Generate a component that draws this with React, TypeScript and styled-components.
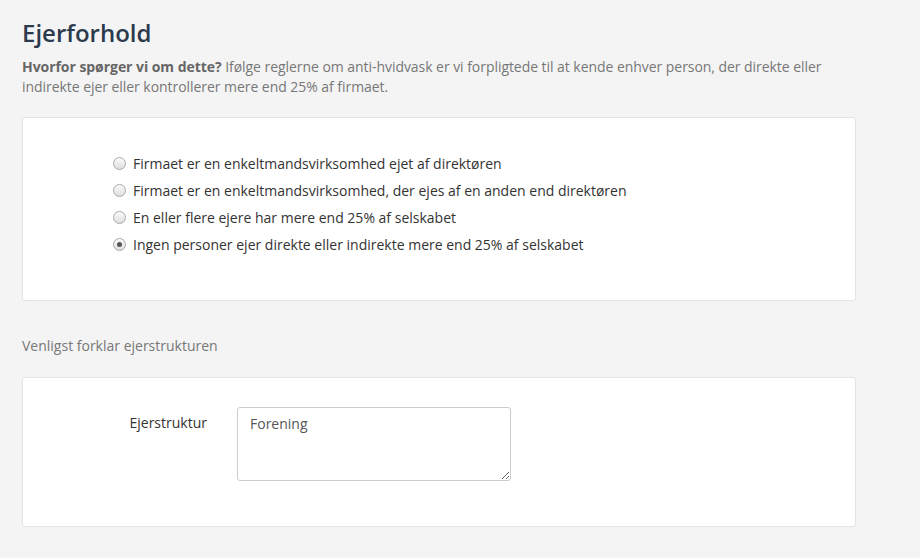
import React from 'react';
import styled, { createGlobalStyle } from 'styled-components';

const GlobalStyle = createGlobalStyle`
	html, body {
		margin: 0;
		padding: 0;
		background: #f4f4f4;
		font-family: 'Open Sans', 'Liberation Sans', sans-serif;
	}
`;

const Page = styled.main`
	width: 834px;
	padding: 17px 0 30px 22px;
`;

const Title = styled.h1`
	margin: 0;
	font-size: 24px;
	line-height: 32px;
	font-weight: 600;
	color: #2c3a4d;
`;

const Intro = styled.p`
	margin: 8px 0 20px;
	font-size: 14px;
	line-height: 20px;
	letter-spacing: -0.05px;
	color: #777;

	strong {
		color: #666;
		font-weight: 700;
	}
`;

const Card = styled.section<{ $pad: string }>`
	background: #fff;
	border: 1px solid #e3e3e3;
	border-radius: 3px;
	padding: ${(p) => p.$pad};
`;

const RadioList = styled.div`
	display: flex;
	flex-direction: column;
`;

const RadioRow = styled.label`
	display: flex;
	align-items: center;
	gap: 7px;
	height: 27px;
	font-size: 14px;
	color: #333;
`;

const Radio = styled.span<{ $checked?: boolean }>`
	position: relative;
	width: 11px;
	height: 11px;
	border-radius: 50%;
	border: 1px solid #a9a9a9;
	background: linear-gradient(#fbfbfb, #dedede);
	flex: none;

	&::after {
		content: '';
		display: ${(p) => (p.$checked ? 'block' : 'none')};
		position: absolute;
		left: 3px;
		top: 3px;
		width: 5px;
		height: 5px;
		border-radius: 50%;
		background: #555;
	}
`;

const SectionLabel = styled.div`
	margin: 35px 0 21px;
	font-size: 14px;
	line-height: 20px;
	color: #777;
`;

const FieldRow = styled.div`
	display: grid;
	grid-template-columns: 184px 274px;
	column-gap: 30px;
	align-items: start;
`;

const FieldLabel = styled.label`
	text-align: right;
	font-size: 14px;
	line-height: 20px;
	padding-top: 6px;
	color: #333;
`;

const TextArea = styled.textarea`
	box-sizing: border-box;
	width: 274px;
	height: 74px;
	padding: 6px 12px;
	border: 1px solid #ccc;
	border-radius: 3px;
	font-family: 'Open Sans', 'Liberation Sans', sans-serif;
	font-size: 14px;
	line-height: 20px;
	color: #555;
	background: #fff;
	outline: none;
`;

const options = [
	'Firmaet er en enkeltmandsvirksomhed ejet af direktøren',
	'Firmaet er en enkeltmandsvirksomhed, der ejes af en anden end direktøren',
	'En eller flere ejere har mere end 25% af selskabet',
	'Ingen personer ejer direkte eller indirekte mere end 25% af selskabet',
];

const App: React.FC = () => {
	return (
		<>
			<GlobalStyle />
			<Page>
				<Title>Ejerforhold</Title>
				<Intro>
					<strong>Hvorfor spørger vi om dette?</strong> Ifølge reglerne om anti-hvidvask er vi
					forpligtede til at kende enhver person, der direkte eller indirekte ejer eller
					kontrollerer mere end 25% af firmaet.
				</Intro>
				<Card $pad="32px 0 42px 90px">
					<RadioList>
						{options.map((text, i) => (
							<RadioRow key={text}>
								<Radio $checked={i === 3} />
								{text}
							</RadioRow>
						))}
					</RadioList>
				</Card>
				<SectionLabel>Venligst forklar ejerstrukturen</SectionLabel>
				<Card $pad="29px 0 45px 0">
					<FieldRow>
						<FieldLabel htmlFor="ejerstruktur">Ejerstruktur</FieldLabel>
						<TextArea id="ejerstruktur" defaultValue="Forening" />
					</FieldRow>
				</Card>
			</Page>
		</>
	);
};

export default App;
